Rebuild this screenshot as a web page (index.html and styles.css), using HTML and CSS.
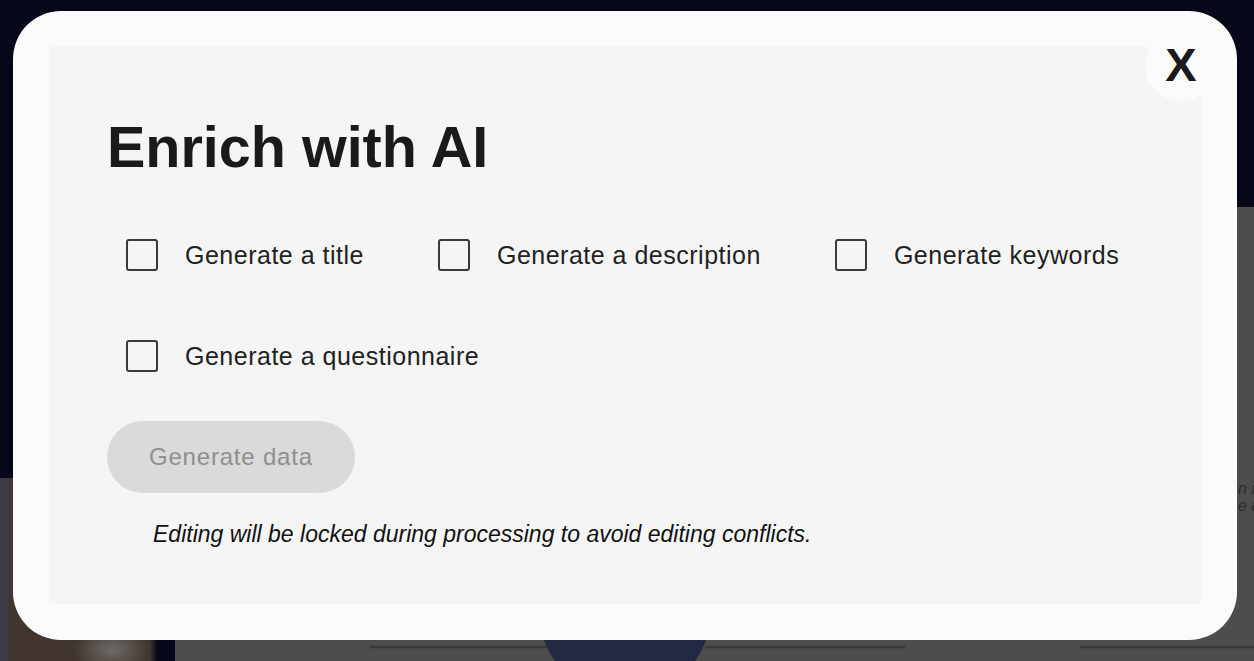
FILE: index.html
```html
<!DOCTYPE html>
<html lang="en">
<head>
    <meta charset="UTF-8">
    <meta name="viewport" content="width=device-width, initial-scale=1.0">
    <title>Enrich with AI</title>
    <link rel="stylesheet" href="styles.css">
</head>
<body>
    <!-- page behind the dialog -->
    <div class="scene">
        <div class="scene-side">
            <div class="side-top"></div>
            <div class="side-photo"></div>
        </div>
        <div class="scene-main">
            <div class="main-top"></div>
            <div class="main-body">
                <p class="main-text">n i<br>e a</p>
                <div class="main-cards">
                    <div class="card-line first"></div>
                    <div class="card-avatar"></div>
                    <div class="card-line second"></div>
                    <div class="card-line third"></div>
                </div>
            </div>
        </div>
    </div>

    <div class="modal">
        <button class="close-btn" type="button">X</button>
        <div class="panel">
            <h1>Enrich with AI</h1>

            <div class="options">
                <label class="option">
                    <input type="checkbox">
                    <span>Generate a title</span>
                </label>
                <label class="option">
                    <input type="checkbox">
                    <span>Generate a description</span>
                </label>
                <label class="option">
                    <input type="checkbox">
                    <span>Generate keywords</span>
                </label>
                <label class="option">
                    <input type="checkbox">
                    <span>Generate a questionnaire</span>
                </label>
            </div>

            <button class="generate-btn" type="button" disabled>Generate data</button>

            <p class="note">Editing will be locked during processing to avoid editing conflicts.</p>
        </div>
    </div>
</body>
</html>
```

FILE: styles.css
```css
body {
    margin: 0;
    font-family: 'Liberation Sans', Arial, Helvetica, sans-serif;
    overflow: hidden;
}
.scene {
    display: flex;
    height: 661px;
    background: #07071a;
}
.scene-side {
    flex: none;
    width: 175px;
    display: flex;
    flex-direction: column;
}
.side-top {
    height: 478px;
}
.side-photo {
    flex: 1;
    background:
        radial-gradient(ellipse 38px 24px at 112px 172px, rgba(150,150,150,0.55), transparent),
        linear-gradient(90deg, #3b3c47 0 8px, #40362f 8px 150px, #07071a 157px);
}
.scene-main {
    flex: 1;
    min-width: 0;
    overflow: hidden;
    display: flex;
    flex-direction: column;
}
.main-top {
    height: 207px;
}
.main-body {
    flex: 1;
    background: #4d4d4d;
    display: flex;
    flex-direction: column;
    justify-content: flex-end;
}
.main-text {
    margin: 0 0 126px 1063px;
    white-space: nowrap;
    font-style: italic;
    font-size: 16px;
    line-height: 17px;
    color: #2c2c2c;
}
.main-cards {
    height: 21px;
    overflow: hidden;
    display: flex;
    align-items: flex-start;
}
.card-line {
    flex: none;
    height: 2px;
    margin-top: 6px;
    background: #393939;
    box-shadow: 0 0 2px #393939;
}
.card-line.first {
    margin-left: 195px;
    width: 178px;
}
.card-avatar {
    flex: none;
    width: 172px;
    height: 172px;
    margin: -115px 0 0 -9px;
    border-radius: 50%;
    background: #232843;
}
.card-line.second {
    margin-left: -6px;
    width: 200px;
}
.card-line.third {
    margin-left: 175px;
    flex: 1;
}

.modal {
    position: absolute;
    top: 11px;
    left: 13px;
    width: 1224px;
    height: 629px;
    box-sizing: border-box;
    padding: 36px;
    border-radius: 48px;
    background: #fbfbfb;
}
.close-btn {
    position: absolute;
    top: 18px;
    right: 20px;
    width: 72px;
    height: 72px;
    padding: 0;
    border: none;
    border-radius: 50%;
    background: #fbfbfb;
    font-family: 'Liberation Sans', Arial, sans-serif;
    font-weight: bold;
    font-size: 47px;
    line-height: 72px;
    color: #1a1a1a;
    cursor: pointer;
}
.panel {
    height: 100%;
    box-sizing: border-box;
    padding: 71px 55px 0 58px;
    background: #f5f5f5;
}
h1 {
    margin: 0;
    font-size: 57.5px;
    line-height: 58px;
    font-weight: bold;
    color: #1a1a1a;
}
.options {
    display: flex;
    flex-wrap: wrap;
    column-gap: 74px;
    row-gap: 69px;
    margin-top: 63px;
    padding-left: 19px;
}
.option {
    display: flex;
    align-items: center;
    gap: 27px;
    font-size: 25px;
    line-height: 32px;
    letter-spacing: 0.5px;
    color: #222;
    cursor: pointer;
}
.option input {
    appearance: none;
    -webkit-appearance: none;
    width: 32px;
    height: 32px;
    margin: 0;
    box-sizing: border-box;
    border: 2px solid #3a3a3a;
    border-radius: 3px;
    background: transparent;
}
.generate-btn {
    display: block;
    margin: 49px 0 0;
    height: 72px;
    padding: 0 42px;
    border: none;
    border-radius: 36px;
    background: #dadada;
    color: #8f8f8f;
    font-family: 'Liberation Sans', Arial, sans-serif;
    font-size: 24px;
    letter-spacing: 0.8px;
}
.note {
    margin: 28px 0 0 46px;
    font-style: italic;
    font-size: 23px;
    line-height: 1.2;
    color: #111;
}
```
